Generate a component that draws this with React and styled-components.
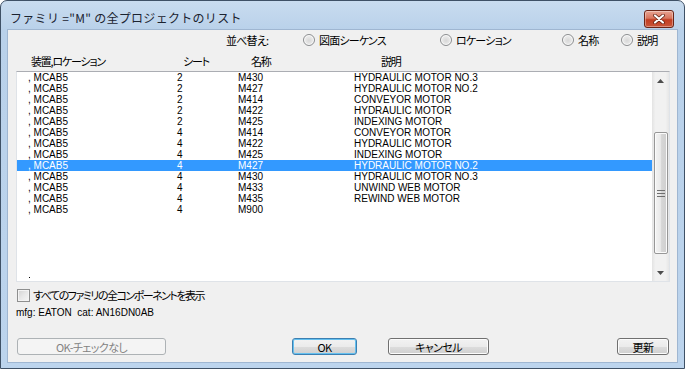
import React from 'react';
import styled, { createGlobalStyle } from 'styled-components';

const Global = createGlobalStyle`
  html, body { margin: 0; padding: 0; background: #ffffff; }
  body { font-family: "Noto Sans CJK JP", "Liberation Sans", sans-serif; }
`;

const JP = `"Noto Sans CJK JP", "Liberation Sans", sans-serif`;
const LATIN = `"Liberation Sans", Arial, sans-serif`;

const Window = styled.div`
  width: 685px;
  height: 369px;
  box-sizing: border-box;
  border: 1px solid #3f5166;
  border-radius: 7px 7px 0 0;
  background: linear-gradient(180deg, #c9dcef 0px, #b9d1ea 29px, #bcd4ed 100%);
  padding: 0 7px 6px;
  display: flex;
  flex-direction: column;
`;

const TitleBar = styled.div`
  height: 29px;
  display: flex;
  align-items: flex-start;
  justify-content: space-between;
`;

const Title = styled.div`
  padding: 9px 0 0 2px;
  font-family: ${JP};
  font-size: 12px;
  letter-spacing: 0.3px;
  line-height: 16px;
  color: #1b2330;
  white-space: pre;
`;

const CloseButton = styled.div`
  margin: 9px 3px 0 0;
  width: 30px;
  height: 18px;
  box-sizing: border-box;
  border: 1px solid #6b2416;
  border-radius: 3px;
  background: linear-gradient(180deg, #e8a493 0%, #d8755e 45%, #c23d21 55%, #c9563a 100%);
  box-shadow: inset 0 0 0 1px rgba(255, 255, 255, 0.35);
  display: flex;
  align-items: center;
  justify-content: center;
`;

const Client = styled.div`
  flex: 1;
  background: #f0f0f0;
  box-shadow: 0 0 0 1px #9fb6d1;
  display: flex;
  flex-direction: column;
`;

const SortRow = styled.div`
  height: 20px;
  display: flex;
  align-items: center;
  padding-left: 218px;
  font-family: ${JP};
  font-size: 11px;
  letter-spacing: -0.8px;
  font-feature-settings: "palt";
  color: #000;
`;

const SortItem = styled.div`
  width: ${(p) => p.$w}px;
  display: flex;
  align-items: center;
  gap: 4px;
  flex: none;
`;

const Radio = styled.span`
  width: 12px;
  height: 12px;
  box-sizing: border-box;
  border-radius: 50%;
  border: 1px solid #8c8e90;
  background: radial-gradient(circle at 50% 55%, #d7d7d7 0%, #e6e6e6 45%, #f7f7f7 100%);
  box-shadow: inset 0 0 0 1px #fafafa;
  flex: none;
`;

const HeaderRow = styled.div`
  height: 21px;
  display: grid;
  grid-template-columns: 152px 68px 130px 1fr;
  align-items: center;
  padding-left: 23px;
  font-family: ${JP};
  font-size: 11px;
  letter-spacing: -1.2px;
  font-feature-settings: "palt";
  color: #000;
`;

const ListBox = styled.div`
  margin-left: 8px;
  width: 654px;
  height: 211px;
  box-sizing: border-box;
  border: 1px solid #dfe3e8;
  border-top-color: #abadb3;
  background: #fff;
  display: flex;
`;

const Rows = styled.div`
  flex: 1;
  display: flex;
  flex-direction: column;
`;

const Row = styled.div`
  height: 11px;
  display: grid;
  grid-template-columns: 149px 61px 116px 1fr;
  padding-left: 11px;
  align-items: center;
  font-family: ${LATIN};
  font-size: 10px;
  line-height: 11px;
  white-space: pre;
  color: ${(p) => (p.$sel ? '#ffffff' : '#000000')};
  background: ${(p) => (p.$sel ? '#3399ff' : 'transparent')};
`;

const Dot = styled.span`
  margin: auto 0 3px 12px;
  width: 1px;
  height: 1px;
  background: #000;
`;

const ScrollBar = styled.div`
  width: 17px;
  display: flex;
  flex-direction: column;
  background: linear-gradient(90deg, #e3e3e3 0%, #f1f1f1 20%, #f1f1f1 80%, #e6e6e6 100%);
`;

const ScrollArrow = styled.div`
  height: 17px;
  display: flex;
  align-items: center;
  justify-content: center;
  flex: none;
`;

const Track = styled.div`
  flex: 1;
  display: flex;
  flex-direction: column;
  padding-top: ${(p) => p.$top}px;
  padding-bottom: ${(p) => p.$bottom}px;
`;

const Thumb = styled.div`
  flex: 1;
  margin: 0 1px 0 2px;
  border: 1px solid #979797;
  border-radius: 2px;
  background: linear-gradient(90deg, #f4f4f4 0%, #e9e9e9 45%, #d6d6d6 55%, #cfcfcf 100%);
  box-shadow: inset 0 0 0 1px #fbfbfb;
  display: flex;
  align-items: center;
  justify-content: center;
`;

const CheckRow = styled.div`
  margin-top: 6px;
  height: 14px;
  padding-left: 9px;
  display: flex;
  align-items: center;
  gap: 3px;
  font-family: ${JP};
  font-size: 11px;
  letter-spacing: -1.5px;
  font-feature-settings: "palt";
  color: #000;
`;

const CheckBox = styled.span`
  width: 13px;
  height: 13px;
  box-sizing: border-box;
  border: 1px solid #8e8f8f;
  background: linear-gradient(135deg, #d2d2d2 0%, #e8e8e8 50%, #f6f6f6 100%);
  box-shadow: inset 0 0 0 1px #f4f4f4;
  flex: none;
`;

const Info = styled.div`
  margin-top: 4px;
  height: 14px;
  line-height: 14px;
  padding-left: 8px;
  font-family: ${LATIN};
  font-size: 10px;
  color: #000;
  white-space: pre;
`;

const ButtonRow = styled.div`
  margin-top: 18px;
  padding-left: 9px;
  display: flex;
`;

const Button = styled.div`
  margin-left: ${(p) => p.$ml || 0}px;
  width: ${(p) => p.$w}px;
  height: 17px;
  box-sizing: border-box;
  border: 1px solid ${(p) => (p.$disabled ? '#adb2b5' : p.$default ? '#3c7fb1' : '#707070')};
  border-radius: 3px;
  background: ${(p) =>
    p.$disabled
      ? '#f4f4f4'
      : 'linear-gradient(180deg, #f2f2f2 0%, #ebebeb 50%, #dddddd 51%, #cfcfcf 100%)'};
  box-shadow: ${(p) =>
    p.$default ? 'inset 0 0 0 1px #64c0ef' : p.$disabled ? 'none' : 'inset 0 0 0 1px #fcfcfc'};
  display: flex;
  align-items: center;
  justify-content: center;
  font-family: ${JP};
  font-size: 11px;
  letter-spacing: -0.6px;
  font-feature-settings: "palt";
  color: ${(p) => (p.$disabled ? '#838383' : '#000')};
`;

const rows = [
  ['2', 'M430', 'HYDRAULIC MOTOR NO.3'],
  ['2', 'M427', 'HYDRAULIC MOTOR NO.2'],
  ['2', 'M414', 'CONVEYOR MOTOR'],
  ['2', 'M422', 'HYDRAULIC MOTOR'],
  ['2', 'M425', 'INDEXING MOTOR'],
  ['4', 'M414', 'CONVEYOR MOTOR'],
  ['4', 'M422', 'HYDRAULIC MOTOR'],
  ['4', 'M425', 'INDEXING MOTOR'],
  ['4', 'M427', 'HYDRAULIC MOTOR NO.2'],
  ['4', 'M430', 'HYDRAULIC MOTOR NO.3'],
  ['4', 'M433', 'UNWIND WEB MOTOR'],
  ['4', 'M435', 'REWIND WEB MOTOR'],
  ['4', 'M900', ''],
];

const sortOptions = [
  ['図面シーケンス', 137],
  ['ロケーション', 122],
  ['名称', 59],
  ['説明', 50],
];

const Arrow = ({ up }) => (
  <svg width="7" height="4" viewBox="0 0 7 4">
    <path d={up ? 'M0 4 L3.5 0 L7 4 Z' : 'M0 0 L7 0 L3.5 4 Z'} fill="#4d4d4d" />
  </svg>
);

const App = () => (
  <>
    <Global />
    <Window>
      <TitleBar>
        <Title>ファミリ ="M" の全プロジェクトのリスト</Title>
        <CloseButton>
          <svg width="12" height="10" viewBox="0 0 12 10">
            <path d="M2 1.5 L10 8.5 M10 1.5 L2 8.5" stroke="#5a1b0e" strokeWidth="3.6" strokeLinecap="round" />
            <path d="M2 1.5 L10 8.5 M10 1.5 L2 8.5" stroke="#ffffff" strokeWidth="2.2" strokeLinecap="round" />
          </svg>
        </CloseButton>
      </TitleBar>
      <Client>
        <SortRow>
          <SortItem $w={77}>並べ替え:</SortItem>
          {sortOptions.map(([label, w]) => (
            <SortItem key={label} $w={w}>
              <Radio />
              {label}
            </SortItem>
          ))}
        </SortRow>
        <HeaderRow>
          <span>装置,ロケーション</span>
          <span>シート</span>
          <span>名称</span>
          <span>説明</span>
        </HeaderRow>
        <ListBox>
          <Rows>
            {rows.map(([sheet, name, desc], i) => (
              <Row key={i} $sel={i === 8}>
                <span>, MCAB5</span>
                <span>{sheet}</span>
                <span>{name}</span>
                <span>{desc}</span>
              </Row>
            ))}
            <Dot />
          </Rows>
          <ScrollBar>
            <ScrollArrow>
              <Arrow up />
            </ScrollArrow>
            <Track $top={43} $bottom={10}>
              <Thumb>
                <svg width="8" height="7" viewBox="0 0 8 7">
                  <path d="M0 0.5 H8 M0 3.5 H8 M0 6.5 H8" stroke="#6f6f6f" strokeWidth="1" />
                </svg>
              </Thumb>
            </Track>
            <ScrollArrow>
              <Arrow />
            </ScrollArrow>
          </ScrollBar>
        </ListBox>
        <CheckRow>
          <CheckBox />
          すべてのファミリの全コンポーネントを表示
        </CheckRow>
        <Info>mfg: EATON  cat: AN16DN0AB</Info>
        <ButtonRow>
          <Button $w={149} $disabled>OK-チェックなし</Button>
          <Button $w={65} $ml={126} $default>OK</Button>
          <Button $w={101} $ml={31}>キャンセル</Button>
          <Button $w={52} $ml={128}>更新</Button>
        </ButtonRow>
      </Client>
    </Window>
  </>
);

export default App;
